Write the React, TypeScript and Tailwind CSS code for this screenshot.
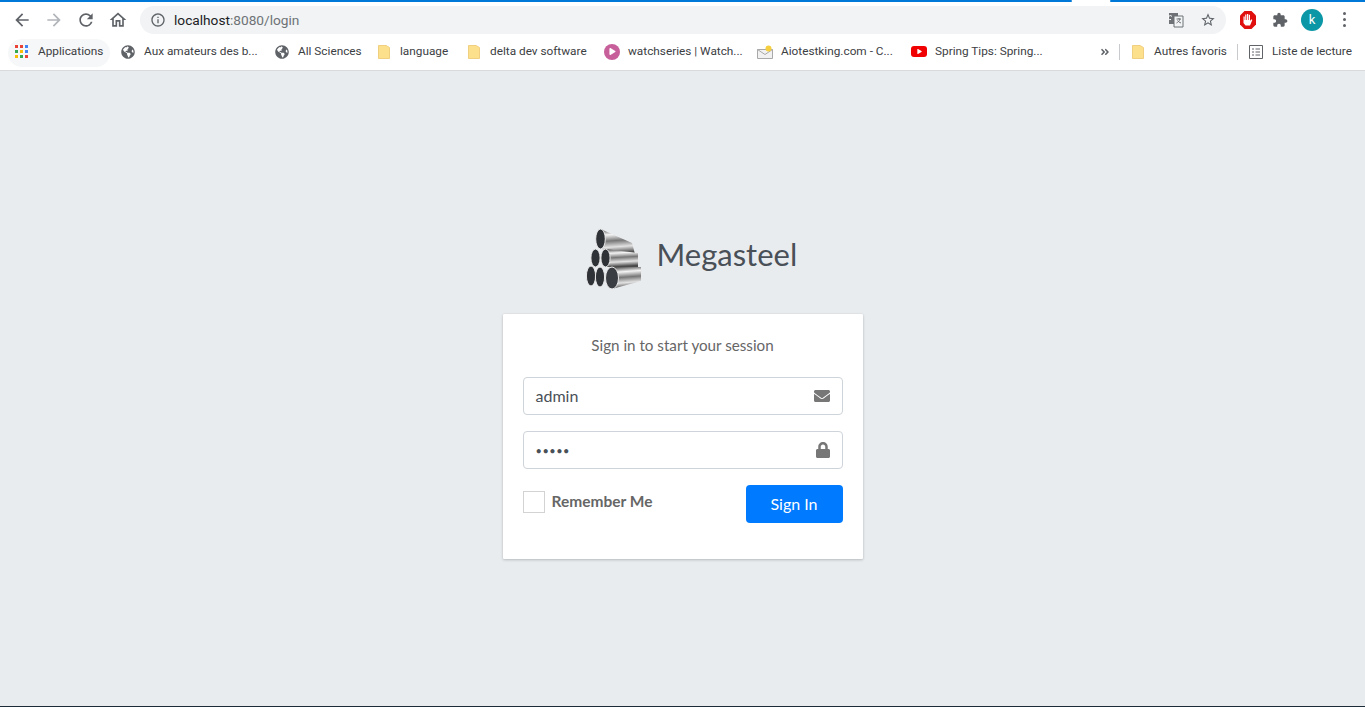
import React from 'react';
import { FaEnvelope, FaLock, FaGlobeAmericas, FaPlay, FaAngleDoubleRight } from 'react-icons/fa';

function MaterialIcon({ d, className }: { d: string; className: string }) {
  return (
    <svg viewBox="0 0 24 24" className={className} fill="currentColor">
      <path d={d} />
    </svg>
  );
}

function FolderIcon() {
  return (
    <svg viewBox="0 0 12 14" className="h-[14px] w-[12px] shrink-0">
      <path d="M.5.5h7.500l3.500 2v11H.5z" fill="#fde08c" stroke="#f0d080" />
    </svg>
  );
}

function AppsIcon() {
  return (
    <div className="grid h-[13px] w-[13px] shrink-0 grid-cols-3 gap-[2px]">
      <span className="h-[3px] w-[3px] bg-[#ea4335]" />
      <span className="h-[3px] w-[3px] bg-[#ea4335]" />
      <span className="h-[3px] w-[3px] bg-[#4285f4]" />
      <span className="h-[3px] w-[3px] bg-[#34a853]" />
      <span className="h-[3px] w-[3px] bg-[#fbbc05]" />
      <span className="h-[3px] w-[3px] bg-[#4285f4]" />
      <span className="h-[3px] w-[3px] bg-[#fbbc05]" />
      <span className="h-[3px] w-[3px] bg-[#34a853]" />
      <span className="h-[3px] w-[3px] bg-[#ea4335]" />
    </div>
  );
}

function GlobeIcon() {
  return <FaGlobeAmericas className="h-[14px] w-[14px] shrink-0 text-[#5f6368]" />;
}

function PlayIcon() {
  return (
    <div className="flex h-4 w-4 shrink-0 items-center justify-center rounded-full bg-[#c75f9b]">
      <FaPlay className="ml-[1px] h-[7px] w-[7px] text-white" />
    </div>
  );
}

function MailIcon() {
  return (
    <svg viewBox="0 0 16 14" className="h-[14px] w-[16px] shrink-0">
      <path d="M.5 4.500h15v9H.5z" fill="#f1f1f1" stroke="#a9a9a9" />
      <path d="M.5 4.500l7.500 5 7.500-5" fill="none" stroke="#a9a9a9" />
      <circle cx="11.500" cy="3.500" r="3" fill="#f5cf3e" />
    </svg>
  );
}

function YoutubeIcon() {
  return (
    <div className="flex h-[11px] w-4 shrink-0 items-center justify-center rounded-[3px] bg-[#f00000]">
      <FaPlay className="h-[5px] w-[5px] text-white" />
    </div>
  );
}

function ReadingListIcon() {
  return (
    <svg viewBox="0 0 14 14" className="h-[14px] w-[14px] shrink-0 text-[#5f6368]" fill="none" stroke="currentColor">
      <path d="M.5.500h13v13H.5z" />
      <path d="M3 4h2M6.500 4H11M3 7h2M6.500 7H11M3 10h2M6.500 10H11" />
    </svg>
  );
}

function TranslateIcon() {
  return (
    <svg viewBox="0 0 16 16" className="h-4 w-4">
      <path d="M1 1h9v11H1z" fill="#6f7276" />
      <path d="M6 4h9v11H6z" fill="#f1f3f4" stroke="#6f7276" />
      <path d="M8.500 7h4.500M11 6v1M12 7c-.5 2-2 3-3.500 4M9.500 8.500c.7 1 2 2 3.500 2.500" fill="none" stroke="#6f7276" />
      <path d="M3 7.500a2 2 0 1 1 1-3" fill="none" stroke="#fff" />
    </svg>
  );
}

function BlockerIcon() {
  return (
    <svg viewBox="0 0 16 18" className="h-[18px] w-4">
      <path d="M4.500 0h7L16 4.500v9L11.500 18h-7L0 13.500v-9z" fill="#e0100f" />
      <path
        d="M3.500 9V5.500h1.200V9h.5V3.500h1.200V9h.6V3h1.200v6h.6V3.800h1.200V10l1.300-1.700 1 .7-2.300 5.500H5.500L3.500 12z"
        fill="#fff"
      />
    </svg>
  );
}

function PipesLogo() {
  return (
    <svg viewBox="0 0 60 66" className="h-[66px] w-[60px] shrink-0">
      <defs>
        <linearGradient id="steel" x1="0" y1="0" x2="0.1" y2="1">
          <stop offset="0" stopColor="#3f3f3f" />
          <stop offset="0.25" stopColor="#f4f4f4" />
          <stop offset="0.5" stopColor="#777" />
          <stop offset="0.75" stopColor="#e2e2e2" />
          <stop offset="1" stopColor="#4a4a4a" />
        </linearGradient>
      </defs>
      {/* back to front: top pipe, middle row, bottom row */}
      <path d="M15.500 1L47 15L50 26L15.500 21Z" fill="url(#steel)" />
      <path d="M20.500 21L53 25L53 39L20.500 39Z" fill="url(#steel)" />
      <ellipse cx="15.500" cy="11" rx="4.800" ry="10" fill="#2f3236" stroke="#e8e8e8" />
      <ellipse cx="10.500" cy="30" rx="4.600" ry="9" fill="#2f3236" stroke="#e8e8e8" />
      <ellipse cx="20.500" cy="30" rx="4.600" ry="9" fill="#2f3236" stroke="#e8e8e8" />
      <path d="M27 39L56 39L56 53L27 61Z" fill="url(#steel)" />
      <ellipse cx="6" cy="48" rx="4.600" ry="10" fill="#2f3236" stroke="#e8e8e8" />
      <ellipse cx="15" cy="49" rx="4.600" ry="10" fill="#2f3236" stroke="#e8e8e8" />
      <ellipse cx="27" cy="50" rx="6.500" ry="11" fill="#3a3d41" stroke="#e8e8e8" />
    </svg>
  );
}

const bookmarks = [
  { icon: <AppsIcon />, label: 'Applications', box: 'ml-[15px]', text: 'ml-[10px] w-[65px]' },
  { icon: <GlobeIcon />, label: 'Aux amateurs des b...', box: 'ml-[18px]', text: 'ml-[9px] w-[113px]' },
  { icon: <GlobeIcon />, label: 'All Sciences', box: 'ml-[18px]', text: 'ml-[9px] w-[62px]' },
  { icon: <FolderIcon />, label: 'language', box: 'ml-[18px]', text: 'ml-[10px] w-[49px]' },
  { icon: <FolderIcon />, label: 'delta dev software', box: 'ml-[19px]', text: 'ml-[10px] w-[97px]' },
  { icon: <PlayIcon />, label: 'watchseries | Watch...', box: 'ml-[17px]', text: 'ml-[8px] w-[113px]' },
  { icon: <MailIcon />, label: 'Aiotestking.com - C...', box: 'ml-[16px]', text: 'ml-[8px] w-[113px]' },
  { icon: <YoutubeIcon />, label: 'Spring Tips: Spring...', box: 'ml-[17px]', text: 'ml-[8px] w-[108px]' },
];

function BrowserBar() {
  return (
    <header className="bg-white font-['Roboto',sans-serif]">
      <div className="flex h-[2px]">
        <div className="w-[1072px] rounded-r-full bg-[#0078d7]" />
        <div className="w-[38px]" />
        <div className="flex-1 rounded-l-full bg-[#0078d7]" />
      </div>
      <div className="flex h-[34px] items-center pt-[1px]">
        <MaterialIcon
          className="ml-[12px] h-5 w-5 text-[#5f6368]"
          d="M20 11H7.830l5.590-5.590L12 4l-8 8 8 8 1.410-1.410L7.830 13H20v-2z"
        />
        <MaterialIcon
          className="ml-3 h-5 w-5 text-[#b2b5b9]"
          d="M12 4l-1.410 1.410L16.170 11H4v2h12.170l-5.580 5.590L12 20l8-8z"
        />
        <MaterialIcon
          className="ml-3 h-5 w-5 text-[#5f6368]"
          d="M17.650 6.350A7.958 7.958 0 0 0 12 4c-4.420 0-7.990 3.580-7.990 8s3.570 8 7.990 8c3.730 0 6.840-2.550 7.730-6h-2.080A5.990 5.990 0 0 1 12 18c-3.310 0-6-2.690-6-6s2.690-6 6-6c1.660 0 3.140.690 4.220 1.780L13 11h7V4l-2.350 2.350z"
        />
        <MaterialIcon
          className="ml-3 h-5 w-5 text-[#5f6368]"
          d="M12 5.690l5 4.500V18h-2v-6H9v6H7v-7.810l5-4.500M12 3L2 12h3v8h6v-6h2v6h6v-8h3L12 3z"
        />
        <div className="ml-[12px] flex h-[28px] w-[1086px] items-center rounded-full bg-[#f1f3f4] pl-[10px] pr-[10px]">
          <MaterialIcon
            className="h-4 w-4 text-[#5f6368]"
            d="M11 7h2v2h-2zm0 4h2v6h-2zm1-9C6.480 2 2 6.480 2 12s4.480 10 10 10 10-4.480 10-10S17.520 2 12 2zm0 18c-4.410 0-8-3.590-8-8s3.590-8 8-8 8 3.590 8 8-3.590 8-8 8z"
          />
          <span className="ml-[8px] pt-[1px] text-[13.700px] text-[#202124]">
            localhost<span className="text-[#6e7276]">:8080/login</span>
          </span>
          <div className="ml-auto flex items-center gap-[16px]">
            <TranslateIcon />
            <MaterialIcon
              className="h-4 w-4 text-[#5f6368]"
              d="M22 9.240l-7.190-.620L12 2 9.190 8.630 2 9.240l5.460 4.730L5.820 21 12 17.270 18.180 21l-1.630-7.030L22 9.240zM12 15.400l-3.760 2.270 1-4.280-3.320-2.880 4.380-.380L12 6.100l1.710 4.040 4.380.380-3.320 2.880 1 4.280L12 15.400z"
            />
          </div>
        </div>
        <div className="ml-[14px]">
          <BlockerIcon />
        </div>
        <MaterialIcon
          className="ml-[16px] h-4 w-4 text-[#5f6368]"
          d="M20.500 11H19V7c0-1.100-.900-2-2-2h-4V3.500C13 2.120 11.880 1 10.500 1S8 2.120 8 3.500V5H4c-1.100 0-1.990.900-1.990 2v3.800H3.500c1.490 0 2.700 1.210 2.700 2.700s-1.210 2.700-2.700 2.700H2V20c0 1.100.900 2 2 2h3.800v-1.500c0-1.490 1.210-2.700 2.700-2.700 1.490 0 2.700 1.210 2.700 2.700V22H17c1.100 0 2-.900 2-2v-4h1.500c1.380 0 2.500-1.120 2.500-2.500S21.880 11 20.500 11z"
        />
        <div className="ml-[13px] flex h-[22px] w-[22px] items-center justify-center rounded-full bg-[#0b97a5] text-[13px] text-white">
          k
        </div>
        <div className="ml-[20px] flex flex-col gap-[3px]">
          <span className="h-[3px] w-[3px] rounded-full bg-[#5f6368]" />
          <span className="h-[3px] w-[3px] rounded-full bg-[#5f6368]" />
          <span className="h-[3px] w-[3px] rounded-full bg-[#5f6368]" />
        </div>
      </div>
      <div className="relative flex h-[35px] items-center border-b border-[#d8dadd] pb-[3px] text-[11.800px] text-[#3c4043]">
        <div className="absolute left-[8px] top-[3px] h-[28px] w-[102px] rounded-full bg-[#f6f7f8]" />
        {bookmarks.map((b) => (
          <div key={b.label} className={`relative flex items-center ${b.box}`}>
            {b.icon}
            <span className={`whitespace-nowrap ${b.text}`}>{b.label}</span>
          </div>
        ))}
        <FaAngleDoubleRight className="ml-[57px] h-[10px] w-[10px] text-[#5f6368]" />
        <div className="ml-[9px] h-4 w-px bg-[#c8cacd]" />
        <div className="ml-[12px]">
          <FolderIcon />
        </div>
        <span className="ml-[10px] w-[72px] whitespace-nowrap">Autres favoris</span>
        <div className="ml-[11px] h-4 w-px bg-[#c8cacd]" />
        <div className="ml-[11px]">
          <ReadingListIcon />
        </div>
        <span className="ml-[9px] whitespace-nowrap">Liste de lecture</span>
      </div>
    </header>
  );
}

function LoginField({ value, icon, textClass }: { value: string; icon: React.ReactNode; textClass: string }) {
  return (
    <div className="flex h-[38px] items-center justify-between rounded-[4px] border border-[#ced4da] bg-white px-3">
      <span className={`text-[#495057] ${textClass}`}>{value}</span>
      {icon}
    </div>
  );
}

export default function App() {
  return (
    <div className="flex h-[707px] flex-col overflow-hidden bg-[#e9ecef] font-['Lato',sans-serif]">
      <BrowserBar />
      <main className="flex flex-1 flex-col items-center pt-[157px]">
        <div className="mb-[20px] flex h-[66px] w-[360px] items-start">
          <div className="ml-[82px]">
            <PipesLogo />
          </div>
          <h1 className="ml-[12px] mt-[6px] whitespace-nowrap text-[31px] font-normal leading-[40px] text-[#495057]">
            Megasteel
          </h1>
        </div>
        <div className="h-[245px] w-[360px] rounded-[1px] bg-white p-5 shadow-[0_0_1px_rgba(0,0,0,0.13),0_1px_3px_rgba(0,0,0,0.2)]">
          <p className="mb-[20px] h-[23px] text-center text-[15.200px] leading-[23px] text-[#666]">
            Sign in to start your session
          </p>
          <div className="flex flex-col gap-4">
            <LoginField value="admin" textClass="text-[16px]" icon={<FaEnvelope className="h-4 w-4 text-[#777]" />} />
            <LoginField
              value="•••••"
              textClass="pt-[3px] text-[11px] tracking-[0.5px]"
              icon={<FaLock className="h-4 w-[14px] text-[#777]" />}
            />
          </div>
          <div className="mt-4 flex items-start justify-between">
            <label className="mt-[6px] flex h-[22px] items-center">
              <span className="h-[22px] w-[22px] border border-[#d3d3d3] bg-white" />
              <span className="ml-[7px] text-[15.500px] font-bold text-[#666]">Remember Me</span>
            </label>
            <button className="h-[38px] w-[97px] rounded-[4px] bg-[#007bff] text-[16px] text-white">Sign In</button>
          </div>
        </div>
      </main>
      <div className="h-px bg-[#1d2b36]" />
    </div>
  );
}
